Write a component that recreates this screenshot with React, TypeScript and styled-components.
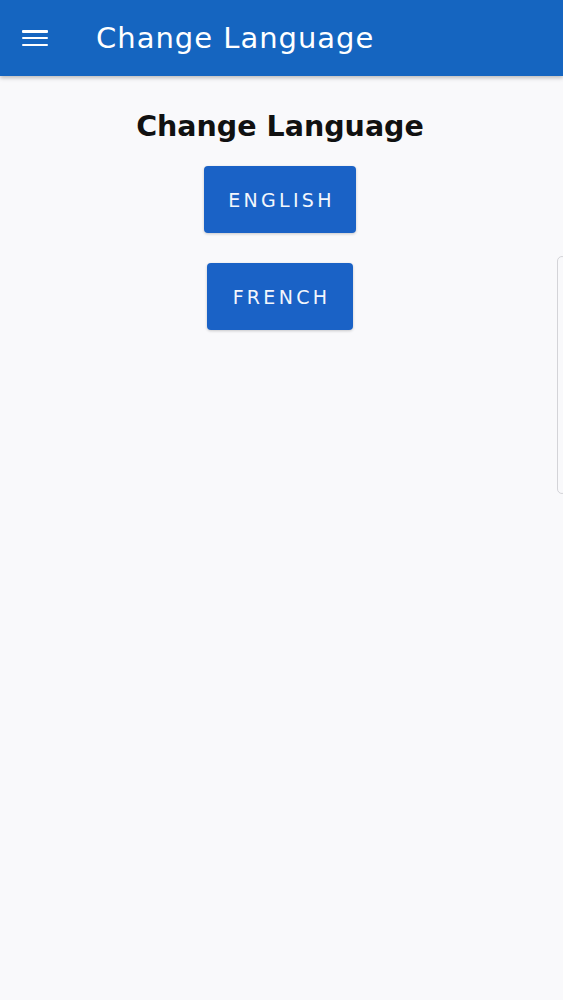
import React from 'react'
import styled, { createGlobalStyle } from 'styled-components'

const GlobalStyle = createGlobalStyle`
	html, body {
		margin: 0;
		padding: 0;
		background: #f9f9fb;
	}
	body {
		font-family: 'DejaVu Sans', 'Open Sans', sans-serif;
		overflow: hidden;
	}
`

const Screen = styled.div`
	position: relative;
	width: 563px;
	height: 1000px;
	background: #f9f9fb;
`

const AppBar = styled.header`
	display: flex;
	align-items: center;
	height: 76px;
	padding-left: 22px;
	background: #1565c0;
	box-shadow: 0 2px 4px rgba(0, 0, 0, 0.25);
	color: #fff;
`

const MenuButton = styled.button`
	display: flex;
	flex-direction: column;
	justify-content: space-between;
	width: 26px;
	height: 16px;
	padding: 0;
	border: none;
	background: transparent;
	cursor: pointer;

	span {
		display: block;
		height: 2.5px;
		border-radius: 1px;
		background: #fff;
	}
`

const BarTitle = styled.h1`
	margin: 0 0 0 48px;
	font-size: 29px;
	font-weight: 400;
	letter-spacing: 1px;
	line-height: 1;
`

const Content = styled.main`
	display: flex;
	flex-direction: column;
	align-items: center;
	padding: 34px 3px 0 0;
`

const Heading = styled.h2`
	margin: 0 0 22px;
	font-size: 28.5px;
	font-weight: 700;
	line-height: 34px;
	color: #111;
`

const LangButton = styled.button<{ $width: number }>`
	width: ${(p) => p.$width}px;
	height: 67px;
	margin-bottom: 30px;
	border: none;
	border-radius: 4px;
	background: #1a62c6;
	box-shadow: 0 1px 3px rgba(0, 0, 0, 0.2);
	color: #f2f6fc;
	font-family: inherit;
	font-size: 19px;
	letter-spacing: 3.3px;
	text-indent: 3px;
	cursor: pointer;
`

const DrawerHandle = styled.div`
	position: absolute;
	right: -4px;
	top: 256px;
	width: 8px;
	height: 236px;
	border: 1px solid #d4d4d8;
	border-radius: 6px;
	background: #f9f9fb;
`

const languages = [
	{ label: 'ENGLISH', width: 152 },
	{ label: 'FRENCH', width: 146 },
]

const App: React.FC = () => {
	return (
		<Screen>
			<GlobalStyle />
			<AppBar>
				<MenuButton aria-label="Open menu">
					<span />
					<span />
					<span />
				</MenuButton>
				<BarTitle>Change Language</BarTitle>
			</AppBar>

			<Content>
				<Heading>Change Language</Heading>
				{languages.map((lang) => (
					<LangButton key={lang.label} $width={lang.width}>
						{lang.label}
					</LangButton>
				))}
			</Content>

			<DrawerHandle />
		</Screen>
	)
}

export default App
